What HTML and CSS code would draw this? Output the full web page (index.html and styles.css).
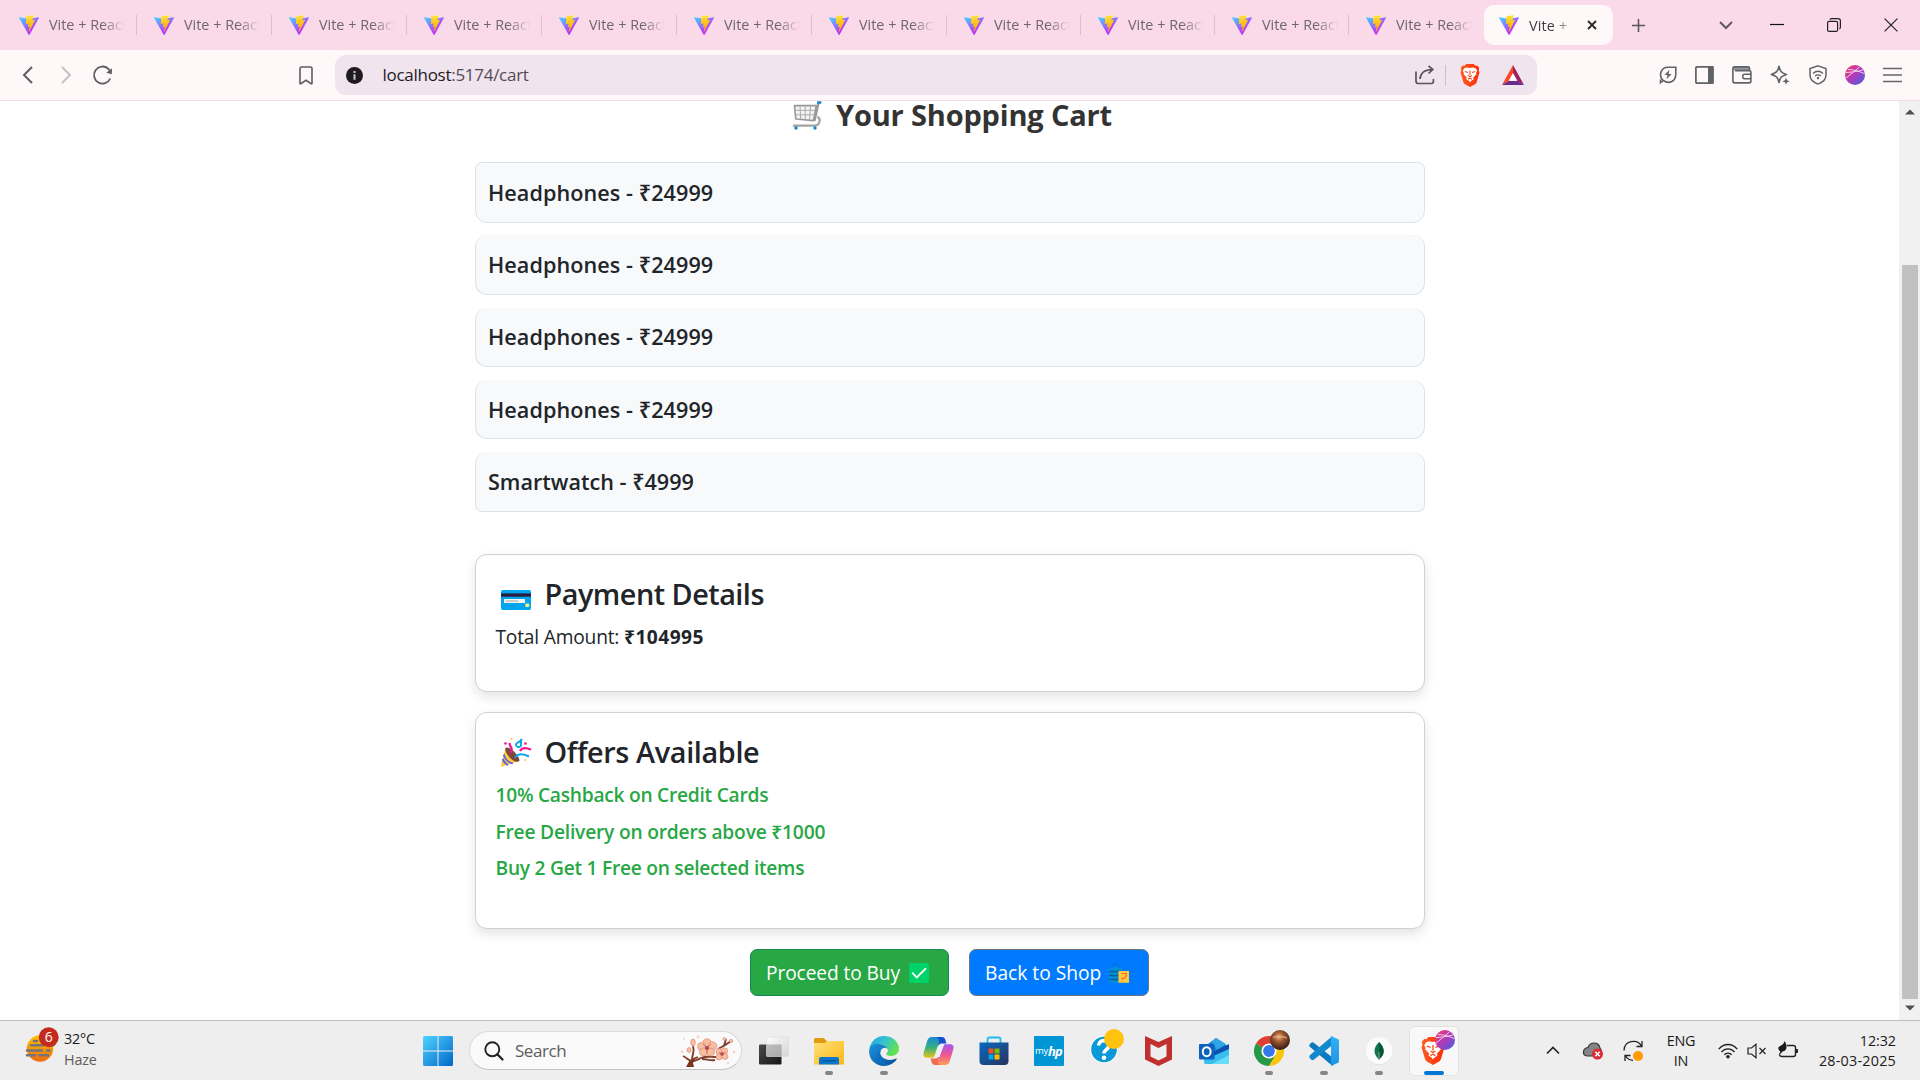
FILE: index.html
```html
<!DOCTYPE html>
<html lang="en">
<head>
<meta charset="utf-8">
<title>Vite + React</title>
<link rel="stylesheet" href="styles.css">
</head>
<body>
<svg class="defs" width="0" height="0" aria-hidden="true">
  <defs>
    <linearGradient id="va" x1="-.828%" x2="57.636%" y1="7.652%" y2="78.411%"><stop offset="0" stop-color="#41D1FF"/><stop offset="1" stop-color="#BD34FE"/></linearGradient>
    <linearGradient id="vb" x1="43.376%" x2="50.316%" y1="2.242%" y2="89.03%"><stop offset="0" stop-color="#FFEA83"/><stop offset=".083" stop-color="#FFDD35"/><stop offset="1" stop-color="#FFA800"/></linearGradient>
    <linearGradient id="orb" x1="0" x2="1" y1="0" y2="1"><stop offset="0" stop-color="#f5405e"/><stop offset=".45" stop-color="#b838b4"/><stop offset="1" stop-color="#4062e8"/></linearGradient>
    <linearGradient id="win" x1="0" x2="1" y1="0" y2="1"><stop offset="0" stop-color="#4fd3ff"/><stop offset="1" stop-color="#0067c9"/></linearGradient>
    <linearGradient id="fold" x1="0" x2="1" y1="0" y2="1"><stop offset="0" stop-color="#ffe07a"/><stop offset="1" stop-color="#fbb713"/></linearGradient>
    <linearGradient id="edgeTop" x1="0" x2="1" y1="0" y2=".5"><stop offset="0" stop-color="#1c9fe0"/><stop offset=".5" stop-color="#33c3d0"/><stop offset="1" stop-color="#63e24f"/></linearGradient>
    <linearGradient id="edgeLow" x1="0" x2="1" y1="0" y2="1"><stop offset="0" stop-color="#1b94e0"/><stop offset="1" stop-color="#0b4a94"/></linearGradient>
    <linearGradient id="copA" x1="0" x2="0" y1="0" y2="1"><stop offset="0" stop-color="#1489d8"/><stop offset=".5" stop-color="#35b07c"/><stop offset="1" stop-color="#e9c51a"/></linearGradient>
    <linearGradient id="copB" x1="0" x2="0" y1="0" y2="1"><stop offset="0" stop-color="#a557ee"/><stop offset=".5" stop-color="#ee5597"/><stop offset="1" stop-color="#ffa052"/></linearGradient>
    <linearGradient id="store" x1="0" x2="1" y1="0" y2="1"><stop offset="0" stop-color="#0a6ac0"/><stop offset="1" stop-color="#26335f"/></linearGradient>
    <linearGradient id="haze" x1="0" x2="0" y1="0" y2="1"><stop offset="0" stop-color="#ffc400"/><stop offset="1" stop-color="#ec6b12"/></linearGradient>
    <linearGradient id="dark" x1="0" x2="1" y1="0" y2="1"><stop offset="0" stop-color="#4a4a4a"/><stop offset="1" stop-color="#151515"/></linearGradient>
    <linearGradient id="glass" x1="0" x2="1" y1="0" y2="1"><stop offset="0" stop-color="#ffffff" stop-opacity=".95"/><stop offset="1" stop-color="#cfcfcf" stop-opacity=".75"/></linearGradient>
    <linearGradient id="vsR" x1="0" x2="0" y1="0" y2="1"><stop offset="0" stop-color="#33b1f7"/><stop offset="1" stop-color="#1e93e6"/></linearGradient>
    <linearGradient id="brv" x1="0" x2="1" y1="0" y2="0"><stop offset="0" stop-color="#ff5a1e"/><stop offset="1" stop-color="#ff2d0a"/></linearGradient>
    <radialGradient id="photo" cx=".45" cy=".35" r=".7"><stop offset="0" stop-color="#f0b07c"/><stop offset=".35" stop-color="#a05a34"/><stop offset="1" stop-color="#1f1310"/></radialGradient>
  </defs>
  <symbol id="vite" viewBox="0 0 256 257"><path fill="url(#va)" d="M255.153 37.938L134.897 252.976c-2.483 4.44-8.862 4.466-11.382.048L.875 37.958c-2.746-4.814 1.371-10.646 6.827-9.67l120.385 21.517a6.537 6.537 0 0 0 2.322-.004l117.867-21.483c5.438-.991 9.574 4.796 6.877 9.62Z"/><path fill="url(#vb)" d="M185.432.063L96.44 17.501a3.268 3.268 0 0 0-2.634 3.014l-5.474 92.456a3.268 3.268 0 0 0 3.997 3.378l24.777-5.718c2.318-.535 4.413 1.507 3.936 3.838l-7.361 36.047c-.495 2.426 1.782 4.5 4.151 3.78l15.304-4.649c2.372-.72 4.652 1.36 4.15 3.788l-11.698 56.621c-.732 3.542 3.979 5.473 5.943 2.437l1.313-2.028l72.516-144.72c1.215-2.423-.88-5.186-3.54-4.672l-25.505 4.922c-2.396.462-4.435-1.77-3.759-4.114l16.646-57.705c.677-2.35-1.37-4.583-3.769-4.113Z"/></symbol>
  <symbol id="lion" viewBox="0 0 24 28"><path d="M12 0h4.6l2 2.2 2.2-.3L23.3 5l-.8 2.4 1 2.8-3.4 11.6c-.4 1.3-1 2-2 2.7L12 28l-6.100-3.500c-1-.7-1.600-1.400-2-2.700L.5 10.200l1-2.800L.700 5l2.500-3.100 2.200.300 2-2.200z" fill="url(#brv)"/><path d="M8 4.200l4 .8 4-.8 3 1 1.800 3.300-1.300 2.300.3 1.700-3.800 4 .4 2.300-3 1.700L12 22.500l-1.400-2-3-1.700.4-2.300-3.800-4 .3-1.700-1.300-2.300L5 5.200z" fill="#fff"/><path d="M5.600 9l4 1.300M18.400 9l-4 1.300M12 8v5.500M9.600 14l2.400 1.500 2.400-1.500M9.500 18.600l2.500-1.400 2.500 1.400" fill="none" stroke="#fb4713" stroke-width="1.300"/></symbol>
  <symbol id="ball" viewBox="0 0 20 20"><circle cx="10" cy="10" r="10" fill="url(#orb)"/><path d="M.8 13.300C5 9.700 10 5.700 14.700 1.800M3 4.500c6 .2 11.500 1.800 16.500 4.200M.8 7.500C6 7.300 13 6.400 18.500 4.800" fill="none" stroke="#f6cbe9" stroke-width="1"/></symbol>
</svg>

<header class="browser">
  <div class="tabs">
    <div class="tab"><svg class="fav"><use href="#vite"/></svg><span class="tab-text">Vite + React</span></div>
    <div class="tab"><svg class="fav"><use href="#vite"/></svg><span class="tab-text">Vite + React</span></div>
    <div class="tab"><svg class="fav"><use href="#vite"/></svg><span class="tab-text">Vite + React</span></div>
    <div class="tab"><svg class="fav"><use href="#vite"/></svg><span class="tab-text">Vite + React</span></div>
    <div class="tab"><svg class="fav"><use href="#vite"/></svg><span class="tab-text">Vite + React</span></div>
    <div class="tab"><svg class="fav"><use href="#vite"/></svg><span class="tab-text">Vite + React</span></div>
    <div class="tab"><svg class="fav"><use href="#vite"/></svg><span class="tab-text">Vite + React</span></div>
    <div class="tab narrow"><svg class="fav"><use href="#vite"/></svg><span class="tab-text">Vite + React</span></div>
    <div class="tab narrow"><svg class="fav"><use href="#vite"/></svg><span class="tab-text">Vite + React</span></div>
    <div class="tab narrow"><svg class="fav"><use href="#vite"/></svg><span class="tab-text">Vite + React</span></div>
    <div class="tab last"><svg class="fav"><use href="#vite"/></svg><span class="tab-text">Vite + React</span></div>
    <div class="tab-active"><svg class="fav"><use href="#vite"/></svg><span class="active-text">Vite +</span><svg class="tab-close" viewBox="0 0 10 10"><path d="M1 1l8 8M9 1L1 9" stroke="#2b2b2b" stroke-width="1.900"/></svg></div>
    <svg class="new-tab" viewBox="0 0 14 14"><path d="M7 0v14M0 7h14" stroke="#5b565a" stroke-width="1.700"/></svg>
    <div class="window-controls">
      <svg width="14" height="9" viewBox="0 0 14 9"><path d="M1 1l6 6 6-6" fill="none" stroke="#5f5a5f" stroke-width="2"/></svg>
      <svg width="14" height="14" viewBox="0 0 14 14"><path d="M0 6.500h14" stroke="#111" stroke-width="1.200"/></svg>
      <svg width="14" height="14" viewBox="0 0 14 14"><g fill="none" stroke="#222" stroke-width="1.200"><rect x=".6" y="3.400" width="10" height="10" rx="1.500"/><path d="M3 1.600C3.500.9 4 .6 4.700.6H11A2.400 2.400 0 0 1 13.400 3v6.300c0 .8-.4 1.400-1 1.700"/></g></svg>
      <svg width="14" height="14" viewBox="0 0 14 14"><path d="M.6.6l12.800 12.800M13.400.6L.6 13.400" stroke="#222" stroke-width="1.200"/></svg>
    </div>
  </div>

  <div class="toolbar">
    <div class="nav">
      <svg width="12" height="18" viewBox="0 0 12 18"><path d="M10 1L2 9l8 8" fill="none" stroke="#5f5d63" stroke-width="2"/></svg>
      <svg width="12" height="18" viewBox="0 0 12 18"><path d="M2 1l8 8-8 8" fill="none" stroke="#c5c0c4" stroke-width="2"/></svg>
      <svg width="20" height="20" viewBox="0 0 20 20"><path d="M17.300 13.500A8.500 8.500 0 1 1 15 3.500l1.600 2" fill="none" stroke="#5f5d63" stroke-width="1.800"/><path d="M19 3.200l-.2 6-5.500-1.500z" fill="#5f5d63"/></svg>
    </div>
    <svg class="bookmark" width="14" height="19" viewBox="0 0 14 19"><path d="M1 2.500Q1 1 2.500 1h9Q13 1 13 2.500V17.500q-.4.600-1.200 0L7 14.300 2.200 17.500q-.8.600-1.200 0z" fill="none" stroke="#5f5d63" stroke-width="1.600"/></svg>
    <div class="address">
      <svg width="17" height="17" viewBox="0 0 17 17"><circle cx="8.500" cy="8.500" r="8.500" fill="#1e1a1d"/><path d="M7.500 7.300h2v5.500h-2zM7.500 4h2v2h-2z" fill="#cfc5ce"/></svg>
      <span class="url"><b>localhost</b>:5174/cart</span>
      <div class="address-tools">
        <svg width="20" height="20" viewBox="0 0 20 20"><path d="M1 6.500V16q0 2.500 2.500 2.500h13q1.900 0 1.900-2.200V14M5 14C5.300 8.500 9 4.700 17.500 4.500M13.500.8l4.300 3.700-4.300 4" fill="none" stroke="#5a545b" stroke-width="1.700"/></svg>
        <i class="bar"></i>
        <svg width="20" height="23"><use href="#lion"/></svg>
        <svg class="bat" width="22" height="20" viewBox="0 0 22 20"><path d="M11 0L0 20l7-4 4-7.500z" fill="#ff4724"/><path d="M11 0l11 20-7-4-4-7.500z" fill="#9e1f63"/><path d="M0 20h22l-7-4.300H7z" fill="#662d91"/><path d="M11 8l4.300 7.800H6.700z" fill="#fff"/></svg>
      </div>
    </div>
    <div class="extensions">
      <svg width="18" height="18" viewBox="0 0 18 18"><g fill="none" stroke="#5f6368" stroke-width="1.600"><path d="M4.200 14.500C-1 9.500 2 1.200 9 1.200h7.800V8c0 7.500-6.500 10.500-12.600 6.500zM1.500 13.500V16.800l2.700-2.300"/></g><path d="M10.500 3.800L5.500 9h3l-1 4.200L12.700 8H9.500z" fill="#5f6368"/></svg>
      <svg width="19" height="18" viewBox="0 0 19 18"><rect x=".9" y=".9" width="17" height="16.200" rx="1" fill="none" stroke="#5f6368" stroke-width="1.700"/><path d="M13 0h5.500v18H13z" fill="#5f6368"/></svg>
      <svg width="20" height="18" viewBox="0 0 20 18"><path d="M1 2.500h16" stroke="#96969b" stroke-width="3.500"/><g fill="none" stroke="#5f6368" stroke-width="1.600"><path d="M17.500 4.500V2.500Q17.500.9 16 .9H2.500Q.9.900.9 2.500V15q0 1.900 1.900 1.900H17q1.900 0 1.900-1.900V6.300q0-1.700-1.900-1.700H3"/><path d="M19 8.300h-6.500q-1.700 0-1.700 1.500v1.500q0 1.500 1.700 1.500H19"/></g></svg>
      <svg width="20" height="20" viewBox="0 0 20 20"><path d="M9 1.200c1 5 2 6.500 7.400 8.200C11.500 11.200 10.300 12 9 17.500 7.700 12 6.500 11 1.300 9.400 6.500 7.700 8 6.300 9 1.200z" fill="none" stroke="#5f6368" stroke-width="1.600" stroke-linejoin="round"/><path d="M16 12.500l1 2.800 2.800 1-2.800 1-1 2.700-1-2.700-2.800-1 2.800-1z" fill="#5f6368"/></svg>
      <svg width="18" height="20" viewBox="0 0 18 20"><path d="M9 .9l8 2.600v6.300c0 4.600-3.200 7.600-8 9.300-4.800-1.700-8-4.700-8-9.300V3.500z" fill="none" stroke="#5f6368" stroke-width="1.500"/><path d="M4 8.500c3-2.600 7-2.600 10 0M6 11c2-1.500 4-1.500 6 0" fill="none" stroke="#5f6368" stroke-width="1.400"/><circle cx="9" cy="13" r="1.200" fill="#5f6368"/></svg>
      <svg width="20" height="20"><use href="#ball"/></svg>
      <svg width="19" height="16" viewBox="0 0 19 16"><path d="M0 1.500h19M0 8h19M0 14.500h19" stroke="#66656b" stroke-width="1.600"/></svg>
    </div>
  </div>
</header>

<div class="viewport">
  <main class="page">
    <div class="cart">
      <h2 class="cart-title">
        <svg width="30" height="29" viewBox="0 0 30 29"><path d="M1 24.700h20.500c7 0 7.500-7 4-9" fill="none" stroke="#a3a3a3" stroke-width="2.200"/><path d="M2.500 4.700h21.800L21.500 19.700 3.800 18z" fill="#f4f4f4" stroke="#999" stroke-width="1.700" stroke-linejoin="round"/><path d="M8 5l.7 13M13.200 5v14M18.500 5l-1 14M3 9.300h20.500M3.500 13.800h19" stroke="#aaa" stroke-width="1"/><path d="M26.700 1.500L22.500 20" stroke="#999" stroke-width="2.200"/><path d="M25.300.2h4v2.500h-4.300z" fill="#0a86d2"/><circle cx="4" cy="27" r="1.700" fill="#0a86d2"/><circle cx="23" cy="27" r="1.700" fill="#0a86d2"/></svg>
        <span>Your Shopping Cart</span>
      </h2>
      <ul class="items">
        <li>Headphones - ₹24999</li>
        <li>Headphones - ₹24999</li>
        <li>Headphones - ₹24999</li>
        <li>Headphones - ₹24999</li>
        <li>Smartwatch - ₹4999</li>
      </ul>
      <section class="card payment">
        <h4><svg width="30" height="20" viewBox="0 0 30 20"><rect width="30" height="20" rx="2" fill="#00a4ef"/><path d="M0 3.400h30v3.300H0z" fill="#2b1b3c"/><path d="M3 9h21v4H3z" fill="#f3f3f3"/><path d="M5 11h12" stroke="#a8a8a8" stroke-width="1"/><rect x="24.300" y="13.500" width="4" height="3.500" rx="1" fill="#f7ef7e"/></svg><span>Payment Details</span></h4>
        <p>Total Amount: <strong>₹104995</strong></p>
      </section>
      <section class="card offers">
        <h4><svg class="party" width="30" height="29" viewBox="0 0 30 29"><path d="M4.500 10L0 27.500q0 1.500 1.500 1L18.500 23z" fill="#ffc83d"/><path d="M4.500 10q3-2 8.500 3.500t5.500 9.500q-4 2.500-9.500-3.300T4.500 10z" fill="#7a4a3c"/><path d="M2.700 16.500c1 4 4.500 8 9 9M1.500 21c1.400 3 3 5 5.500 6" fill="none" stroke="#5864e8" stroke-width="1.900"/><path d="M9 15c2.500-2 2.200-5 0-7.500L8.500 5M19 13c1.500-3 5-4 11-1.500" fill="none" stroke="#f5128f" stroke-width="2.200"/><path d="M20 1v6c0 3.500-5.500 2-5-.5.500-2 4-2 6-5.500M14 19.500c2.500-4 8-4 14-1" fill="none" stroke="#0fa8f0" stroke-width="2"/><circle cx="4.500" cy="5.500" r="1.300" fill="#f5128f"/><circle cx="24.500" cy="5.500" r="1.300" fill="#f5128f"/><circle cx="10.500" cy="1" r="1" fill="#ffc83d"/><circle cx="24" cy="22" r="1" fill="#ffc83d"/></svg><span>Offers Available</span></h4>
        <ul>
          <li>10% Cashback on Credit Cards</li>
          <li>Free Delivery on orders above ₹1000</li>
          <li>Buy 2 Get 1 Free on selected items</li>
        </ul>
      </section>
      <div class="actions">
        <button class="btn buy"><span>Proceed to Buy</span><svg width="20" height="20" viewBox="0 0 20 20"><rect width="20" height="20" rx="1.800" fill="#00d26a"/><path d="M3.600 10.200l4.200 4.200 8.600-8.600" fill="none" stroke="#fff" stroke-width="1.900" stroke-linecap="round"/></svg></button>
        <button class="btn back"><span>Back to Shop</span><svg width="20" height="20" viewBox="0 0 20 20"><path d="M2.500 5C2 .5 10.500-1.500 10.500 5" fill="none" stroke="#006ac4" stroke-width="1"/><rect y="4.500" width="13" height="15" fill="#008fd8"/><path d="M0 8.500h13M0 12.500h13M0 16.500h13" stroke="#0a5f98" stroke-width="1.300"/><rect x="9.500" y="8" width="10.500" height="11.800" fill="#ffc83d"/><path d="M12 10.500h5.500c0 5-3 5-5.500 5.500" fill="none" stroke="#f26a35" stroke-width="1.200"/></svg></button>
      </div>
    </div>
  </main>
  <div class="scrollbar">
    <svg width="10" height="6" viewBox="0 0 10 6"><path d="M0 5.500L5 .5l5 5z" fill="#505050"/></svg>
    <i class="thumb"></i>
    <svg width="10" height="6" viewBox="0 0 10 6"><path d="M0 .5l5 5 5-5z" fill="#505050"/></svg>
  </div>
</div>

<footer class="taskbar">
  <div class="weather">
    <svg width="34" height="36" viewBox="0 0 34 36"><circle cx="15" cy="21.500" r="13.200" fill="url(#haze)"/><g stroke="#74757a" stroke-width="2.500" stroke-linecap="round"><path d="M9 14h3M6 18.300h12M24 18.300h4.500M2 23.500h15M22 23.500h2.500M2 28.300h8M14.500 28.300h8.500"/></g><circle cx="23.700" cy="10.300" r="10" fill="#c42b1c"/><text x="23.700" y="15.300" text-anchor="middle" class="badge-number">6</text></svg>
    <div class="weather-text"><span>32°C</span><span class="muted">Haze</span></div>
  </div>
  <div class="slot"><svg width="30" height="30" viewBox="0 0 30 30"><path d="M0 1.500Q0 0 1.500 0h13v14.500H0zM15.500 0h13Q30 0 30 1.500v13H15.500zM0 15.500h14.500V30h-13Q0 30 0 28.500zM15.500 15.500H30v13q0 1.500-1.500 1.500h-13z" fill="url(#win)"/></svg></div>
  <div class="search">
    <svg width="20" height="20" viewBox="0 0 20 20"><circle cx="8.300" cy="8.300" r="7" fill="none" stroke="#222" stroke-width="1.900"/><path d="M13.300 13.300l5.200 5.200" stroke="#222" stroke-width="2.300" stroke-linecap="round"/></svg>
    <span>Search</span>
    <svg class="blossom" width="56" height="32" viewBox="0 0 56 32"><path d="M9 30c1-6 5-6 9-8M3 21c4 2 5 4 8 5s6-1 10-3 9-1 15-1M12 25c0-6 3-8 1-14M38 14c4-2 8-4 13-8M44 11l2-7M22 24c5 0 8 2 13 1" fill="none" stroke="#843f2a" stroke-width="1.900"/><path d="M6 32l4-7 5-1-2 4 1 4z" fill="#7b3420"/><g fill="#f9bda0" stroke="#d98270" stroke-width=".6"><circle cx="27" cy="8" r="4.300"/><circle cx="21.500" cy="11.500" r="4"/><circle cx="32.500" cy="11" r="4.300"/><circle cx="23.500" cy="17" r="4"/><circle cx="30.500" cy="17" r="4"/><circle cx="39" cy="16.500" r="3"/><circle cx="44.500" cy="16" r="3.200"/><circle cx="39" cy="22" r="3"/><circle cx="45" cy="21.500" r="3"/><ellipse cx="13" cy="7.500" rx="2.300" ry="3.600"/><ellipse cx="9" cy="15" rx="2" ry="2.600"/><circle cx="51" cy="6" r="1.700"/><circle cx="44.500" cy="4" r="1.500"/></g><g fill="#ac4050"><circle cx="27" cy="13" r="2"/><circle cx="42" cy="19" r="1.700"/></g><path d="M27 13l-4-4M27 13l4-4M27 13v5M42 19l-3-2M42 19l3-2" stroke="#b75754" stroke-width=".7"/><g fill="#fad4cc"><circle cx="2" cy="17" r="1.400"/><circle cx="18" cy="2" r="1.500"/><circle cx="54" cy="17" r="1.500"/><circle cx="48" cy="28" r="1.200"/><circle cx="4" cy="4" r="1"/></g></svg>
  </div>
  <nav class="apps">
    <div class="slot"><svg width="30" height="30" viewBox="0 0 30 30"><rect y="8.500" width="22.500" height="20" rx="1" fill="url(#dark)"/><rect x="7.500" y="1" width="22" height="19.500" rx="1" fill="url(#glass)" stroke="#ddd" stroke-width=".7"/><path d="M7.500 8.500h15v12h-15z" fill="#a8a8a8" opacity=".65"/></svg></div>
    <div class="slot running"><svg width="30" height="30" viewBox="0 0 30 30"><path d="M0 3.500Q0 2 1.500 2h8.300L13 5.300V9H0z" fill="#df9c0c"/><path d="M0 7h11l2.500-2H30v23.500H0z" fill="url(#fold)"/><path d="M5 28.500V23q0-2 2-2h16q2 0 2 2v5.500z" fill="#0a76cb"/><path d="M8 24.800h14" stroke="#054b8b" stroke-width="1"/></svg></div>
    <div class="slot running"><svg width="30" height="30" viewBox="0 0 30 30"><path d="M.3 13C2 4.500 8-.1 15.500 0 25 .2 30.300 7.500 30 13c-.3 4.500-4 7-8 7-3.200 0-5-1-4.800-1.900.2-1 2.300-1.800 1.500-5C17.800 8.700 8 5 .3 13z" fill="url(#edgeTop)"/><path d="M.1 14.500C1 9 6 7.600 10 7.900c5 .3 8.700 3 8.800 5.600-1.500-2.600-5.500-2.300-7 .8-2.300 5 3 9.600 9 9.600 4 0 6.300-2 7-1.300.6.700-4.500 7.400-12.300 7.400C6 30-.3 23 .1 14.500z" fill="url(#edgeLow)"/><path d="M11.800 14.300C9 20 13 27.300 20 29 10.500 31 3.800 20 11.800 14.300z" fill="#0b70c8"/></svg></div>
    <div class="slot"><svg width="31" height="28" viewBox="0 0 31 28"><path d="M17.500 0H9Q5.300 0 4.200 4L1 14.500C-.7 19.500 1.600 20.700 4 20.700h4.500q2.500 0 3.500-3.300L15.600 6z" fill="url(#copA)"/><path d="M12 0h7q2.600 0 3.400 3l1 3.500h-4.600q-3 0-4.300 3.700l1.500-6.700Q16 .3 12 0z" fill="#184fd0"/><path d="M13.500 28H22q3.700 0 4.800-4l3.200-10.500c1.700-5-.6-6.200-3-6.200h-4.500q-2.500 0-3.500 3.300L15.400 22z" fill="url(#copB)"/><path d="M19 28h-7q-2.600 0-3.400-3l-1-3.500h4.600q3 0 4.300-3.700L15 24.500q0 3 4 3.500z" fill="#f36b53"/><path d="M18 8h3l-4.500 12h-3z" fill="#eef"/></svg></div>
    <div class="slot"><svg width="30" height="30" viewBox="0 0 30 30"><path d="M8.500 8V3.500q0-2 2-2h9q2 0 2 2V8" fill="none" stroke="#19bdf2" stroke-width="1.800"/><path d="M.5 6.500h29V25q0 4-4 4h-21q-4 0-4-4z" fill="url(#store)"/><path d="M9.500 12.500h5v5h-5z" fill="#f25022"/><path d="M15.500 12.500h5v5h-5z" fill="#7fba00"/><path d="M9.500 18.500h5v5h-5z" fill="#00a4ef"/><path d="M15.500 18.500h5v5h-5z" fill="#ffb900"/></svg></div>
    <div class="slot"><span class="hp">my<b>hp</b></span></div>
    <div class="slot help"><svg width="34" height="36" viewBox="0 0 34 36"><circle cx="14" cy="20.500" r="14" fill="#f7f9fa"/><circle cx="14" cy="20.500" r="12.800" fill="#0a98d6"/><path d="M8.500 16.500c.5-7 11.800-6 10.500.5-.8 3.500-5 3.500-5 7.500" fill="none" stroke="#fff" stroke-width="3.600"/><circle cx="14" cy="28.800" r="2.300" fill="#fff"/><circle cx="24" cy="10" r="10" fill="#ffc20e"/></svg></div>
    <div class="slot"><svg width="27" height="30" viewBox="0 0 27 30"><path d="M0 0l13.500 6L27 0v23.500L13.500 30 0 23.500zM5.500 8v12.500l8 4 8-4V8l-8 4z" fill="#c22f2f" fill-rule="evenodd"/></svg></div>
    <div class="slot"><svg width="30" height="30" viewBox="0 0 30 30"><path d="M5 11L17 2l13 9v6L13 24z" fill="#1382d2"/><path d="M13 5.500l4-3.500 10 6-9 6z" fill="#31a5e5"/><path d="M14 16L30 8v8L15 24z" fill="#0d4fae"/><path d="M12 21l18-8v12.500q0 2.500-2.500 2.500h-21Q5 28 5 25.500V18z" fill="#38bff0"/><path d="M13 28l17-9v6.500q0 2.500-2.500 2.500z" fill="#65ddfb"/><rect y="8" width="15.500" height="15.500" rx="1" fill="#0d62bd"/><ellipse cx="7.700" cy="15.700" rx="3.900" ry="4.500" fill="none" stroke="#fff" stroke-width="2"/></svg></div>
    <div class="slot running chrome"><svg width="36" height="36" viewBox="0 0 36 36"><path d="M15 21L2 13.500A15 15 0 0 1 28 13.500z" fill="#df3e33"/><path d="M15 21L2 13.500a15 15 0 0 0 13 22.500l7-11z" fill="#279847"/><path d="M15 21l13-7.500A15 15 0 0 1 15 36l6.500-11z" fill="#fcc50d"/><circle cx="15" cy="21" r="7.600" fill="#fff"/><circle cx="15" cy="21" r="5.900" fill="#3678ea"/><circle cx="26" cy="10" r="10" fill="url(#photo)"/><path d="M19 7.500c5-1.500 10-1 14 .5" stroke="#f3c494" stroke-width="1.500" opacity=".6" fill="none"/></svg></div>
    <div class="slot running"><svg width="30" height="30" viewBox="0 0 30 30"><path d="M2 7q1.500-1.300 3 0l18.500 14.500V30L.5 10.500Q0 9 .7 8.300z" fill="#0c79c1"/><path d="M2 23.500q1.500 1.300 3 0L23.500 9V0L.5 19.500q-.5 1.500.2 2.500z" fill="#1288cf"/><path d="M22 0l6.700 3Q30 3.700 30 5v20q0 1.400-1.300 2L22 30z" fill="url(#vsR)"/></svg></div>
    <div class="slot running"><svg width="28" height="28" viewBox="0 0 28 28"><circle cx="14" cy="14.300" r="13.600" fill="#dedede"/><circle cx="14" cy="13.800" r="13.500" fill="#fbfbfb"/><path d="M14 5c6 6 6.500 12 0 17.500-6-5.500-6-11.500 0-17.500z" fill="#10754c"/><path d="M14 5c6 6 6.500 12 0 17.500z" fill="#0a5639"/><path d="M14 15v8" stroke="#8aa898" stroke-width="1"/></svg></div>
    <div class="slot current"><svg width="35" height="36" viewBox="0 0 35 36"><svg x="1" y="6" width="24" height="30"><use href="#lion"/></svg><svg x="15" y="0" width="20" height="20"><use href="#ball"/></svg></svg></div>
  </nav>
  <div class="tray">
    <svg class="t-up" width="14" height="9" viewBox="0 0 14 9"><path d="M1 7.500L7 1.500l6 6" fill="none" stroke="#222" stroke-width="1.700"/></svg>
    <svg class="t-cloud" width="20" height="18" viewBox="0 0 20 18"><path d="M5 14Q0 14 .5 9.500 1 6 5 5.500 6.500 1 11 1q5 0 6 5 3 4 0 8z" fill="#858585" stroke="#333" stroke-width="1.200"/><circle cx="14.500" cy="12" r="5.500" fill="#dc2b35"/><path d="M12.300 9.800l4.400 4.400M16.700 9.800l-4.400 4.400" stroke="#fff" stroke-width="1.500"/></svg>
    <svg class="t-sync" width="21" height="22" viewBox="0 0 21 22"><path d="M1 10.500C1 1 14-2 18.500 6M19 1v5.500h-5.500M2 21v-5.500h5.500M2.500 16c2 3 5 4.300 7.500 4.300" fill="none" stroke="#222" stroke-width="1.300"/><circle cx="15" cy="16" r="5" fill="#ff9a05"/></svg>
    <div class="lang"><span>ENG</span><span>IN</span></div>
    <svg class="t-wifi" width="20" height="16" viewBox="0 0 20 16"><g fill="none" stroke="#222" stroke-width="1.300"><path d="M.7 6.200c5.300-6.300 13.300-6.300 18.600 0M3.500 9c3.700-4.300 9.300-4.300 13 0M6.300 11.800c2-2.300 5.400-2.300 7.400 0"/></g><circle cx="10" cy="13.800" r="1.800" fill="#222"/></svg>
    <svg class="t-vol" width="20" height="16" viewBox="0 0 20 16"><path d="M1 5h3.500L9 1.200v13.600L4.500 11H1zM12.500 5l6 6M18.500 5l-6 6" fill="none" stroke="#222" stroke-width="1.200"/></svg>
    <svg class="t-bat" width="20" height="17" viewBox="0 0 20 17"><path d="M9 4.500h6.500q2 0 2 2v7q0 2-2 2H4q-2 0-2.500-1.500" fill="none" stroke="#222" stroke-width="1.400"/><path d="M17.500 8H19q1 0 1 1v2q0 1-1 1h-1.500z" fill="#222"/><path d="M6.500 0c3.500 5 2.500 10-2 10.500L1.500 14l-.8-.8L2.500 11C-1.500 7 1 5.500 3 4.500S6 2.500 6.500 0z" fill="#1a1a1a"/></svg>
    <div class="clock"><span class="time">12:32</span><span class="date">28-03-2025</span></div>
  </div>
</footer>
</body>
</html>
```
FILE: styles.css
```css
* { box-sizing: border-box; }
body {
  margin: 0;
  width: 1920px;
  height: 1080px;
  overflow: hidden;
  display: flex;
  flex-direction: column;
  background: #fff;
  font-family: "Open Sans", "Noto Sans", sans-serif;
  color: #212529;
}
svg { display: block; flex: none; overflow: visible; }
.defs { position: absolute; }
h2, h4, p, ul { margin: 0; padding: 0; list-style: none; }

/* browser chrome */
.browser { flex: none; height: 101px; border-bottom: 1px solid #f1dde1; background: #fff8f8; }
.tabs { height: 50px; display: flex; align-items: center; background: #fad9e9; padding-left: 2px; }
.tab {
  flex: none;
  width: 135px;
  height: 20px;
  display: flex;
  align-items: center;
  gap: 10px;
  padding-left: 17px;
  border-right: 1px solid #d9c0cd;
}
.tab.narrow { width: 134px; }
.tab.last { border-right: 0; }
.fav { width: 20px; height: 20px; }
.tab-text {
  width: 76px;
  overflow: hidden;
  white-space: nowrap;
  font-size: 14.4px;
  line-height: 20px;
  color: #6f666d;
  mask-image: linear-gradient(90deg, #000 54px, transparent 76px);
}
.tab-active {
  flex: none;
  width: 129px;
  height: 40px;
  display: flex;
  align-items: center;
  padding: 0 15px;
  border-radius: 10px;
  background: #fff8f8;
}
.active-text {
  width: 59px;
  padding-left: 10px;
  font-size: 14.4px;
  letter-spacing: .15px;
  white-space: nowrap;
  color: #423d41;
  mask-image: linear-gradient(90deg, #000 34px, rgba(0, 0, 0, .35) 50px);
}
.tab-close { width: 10px; height: 10px; margin-left: 9px; }
.new-tab { width: 13px; height: 13px; margin-left: 19px; }
.window-controls { margin-left: auto; padding-right: 22px; display: flex; align-items: center; gap: 43px; }
.window-controls svg:first-child { margin-right: -6px; }

.toolbar { height: 50px; display: flex; align-items: center; }
.nav { width: 299px; padding-left: 22px; display: flex; align-items: center; gap: 26px; }
.nav svg:last-child { margin-left: -5px; }
.bookmark { margin-right: 22px; }
.address {
  width: 1202px;
  height: 40px;
  display: flex;
  align-items: center;
  padding-left: 11px;
  border-radius: 11px;
  background: #f0e4ee;
}
.url { margin: -2px 0 0 19.500px; font-size: 17px; letter-spacing: -.28px; color: #534b53; }
.url b { font-weight: 400; color: #1f1a1f; }
.address-tools { margin-left: auto; padding-right: 13px; display: flex; align-items: center; }
.bar { width: 1px; height: 21px; margin: 0 14px 0 10px; background: #cbbfcb; }
.bat { margin-left: 22px; }
.extensions { margin-left: auto; padding-right: 18px; display: flex; align-items: center; gap: 18.200px; }

/* page */
.viewport { flex: none; height: 919px; display: flex; overflow: hidden; }
.page { flex: 1; }
.cart { width: 950px; margin: 0 auto; }
.cart-title {
  height: 28px;
  margin-bottom: 33.300px;
  display: flex;
  justify-content: center;
  align-items: center;
  gap: 14px;
  padding-left: 5px;
  font-size: 29px;
  line-height: 28px;
  font-weight: 700;
  letter-spacing: -.17px;
  white-space: nowrap;
  color: #333;
}
.items { display: flex; flex-direction: column; gap: 12.700px; margin-bottom: 42.200px; }
.items li {
  height: 59.600px;
  display: flex;
  align-items: center;
  padding-left: 12.500px;
  border: 1px solid #dee2e6;
  border-top: 0;
  border-radius: 12px;
  background: #f8f9fb;
  font-size: 21.600px;
  font-weight: 600;
  letter-spacing: .07px;
}
.items li:first-child { height: 60.300px; border-top: 1px solid #dee2e6; border-radius: 7px 7px 12px 12px; }
.items li:last-child { border-radius: 12px 12px 7px 7px; letter-spacing: 0; }
.card {
  padding: 21.300px 20px 0;
  margin-bottom: 20px;
  border: 1px solid #d1d1d1;
  border-radius: 12px;
  background: #fff;
  box-shadow: 0 5px 12px rgba(0, 0, 0, .11);
}
.payment { height: 138px; }
.offers { height: 216.900px; }
.card h4 {
  height: 36px;
  margin-bottom: 10px;
  display: flex;
  align-items: center;
  gap: 14px;
  padding-left: 5px;
  font-size: 28.800px;
  line-height: 36px;
  font-weight: 600;
  letter-spacing: -.5px;
}
.payment h4 svg { margin-top: 12px; }
.offers h4 { letter-spacing: -.35px; }
.payment p { font-size: 19.200px; line-height: 30px; letter-spacing: -.2px; }
.payment strong { letter-spacing: .45px; }
.offers li {
  margin-bottom: 6.300px;
  font-size: 19.200px;
  line-height: 30px;
  font-weight: 600;
  letter-spacing: -.26px;
  color: #28a745;
}
.offers li:nth-child(2) { letter-spacing: -.2px; }
.actions { display: flex; justify-content: center; gap: 20px; }
.btn {
  height: 47px;
  display: flex;
  align-items: center;
  justify-content: space-between;
  padding: 1px 19px 0 15px;
  border-radius: 7px;
  font: 400 19.200px/30px "Open Sans", "Noto Sans", sans-serif;
  white-space: nowrap;
  color: #fff;
}
.buy { width: 199px; border: 1px solid #198754; background: #28a745; letter-spacing: -.11px; }
.back { width: 180px; border: 1px solid #6c757d; background: #007bff; }

.scrollbar {
  width: 21px;
  display: flex;
  flex-direction: column;
  align-items: center;
  padding: 8px 0 9px;
  background: #f1f1f1;
}
.thumb { width: 16px; height: 734px; margin: 150px 0 auto; background: #c1c1c1; }

/* taskbar */
.taskbar { flex: none; height: 60px; display: flex; border-top: 1px solid #bfbfbf; background: #eee; }
.weather { width: 410px; display: flex; padding: 6px 0 0 25px; gap: 5px; }
.badge-number { font-size: 14px; fill: #fff; }
.weather-text { display: flex; flex-direction: column; padding-top: 2px; font-size: 14.400px; line-height: 20.500px; letter-spacing: -.2px; color: #1b1b1b; }
.weather-text .muted { color: #5e5e5e; }
.slot { position: relative; width: 55px; height: 59px; display: flex; align-items: center; justify-content: center; }
.search {
  width: 273px;
  height: 39px;
  margin: 10px 4px 0;
  display: flex;
  align-items: center;
  padding-left: 14px;
  border: 1px solid #dadada;
  border-bottom-color: #c4c4c4;
  border-radius: 20px;
  background: #fafafa;
  font-size: 17px;
  letter-spacing: -.45px;
  color: #5c5c5c;
}
.search span { margin-left: 11px; }
.blossom { margin-left: auto; margin-right: 5px; }
.apps { display: flex; }
.running::after, .current::after {
  content: "";
  position: absolute;
  left: 50%;
  bottom: 5px;
  width: 8px;
  height: 4px;
  margin-left: -4px;
  border-radius: 2px;
  background: #858585;
}
.hp {
  width: 30px;
  height: 30px;
  display: flex;
  align-items: center;
  justify-content: center;
  border-radius: 1px;
  background: #0096d6;
  font-size: 9.500px;
  letter-spacing: -.3px;
  color: #fff;
}
.hp b { font-size: 13px; font-style: italic; letter-spacing: -.8px; }
.help svg { margin: -7px 0 0 7px; }
.chrome svg { margin: -6px 0 0 6px; }
.current svg { position: relative; z-index: 1; margin: -6px 0 0 8px; }
.current::before {
  content: "";
  position: absolute;
  left: 3px;
  top: 5px;
  width: 48px;
  height: 48px;
  border: 1px solid #e3e3e3;
  border-radius: 5px;
  background: #f8f8f8;
}
.current::after { width: 20px; margin-left: -10px; background: #0078d4; }
.tray { margin-left: auto; display: flex; align-items: center; padding-right: 24px; font-size: 14.400px; line-height: 20px; color: #1b1b1b; }
.t-cloud { margin-left: 23px; }
.t-sync { margin-left: 20px; }
.lang, .clock { display: flex; flex-direction: column; }
.lang { width: 30px; margin-left: 22px; align-items: center; letter-spacing: -.2px; }
.t-wifi { margin-left: 22px; }
.t-vol { margin-left: 9px; }
.t-bat { margin-left: 11px; margin-top: -3px; }
.clock { width: 78px; margin-left: 20px; align-items: flex-end; }
.time { letter-spacing: -.1px; }
.date { letter-spacing: .2px; }
```
